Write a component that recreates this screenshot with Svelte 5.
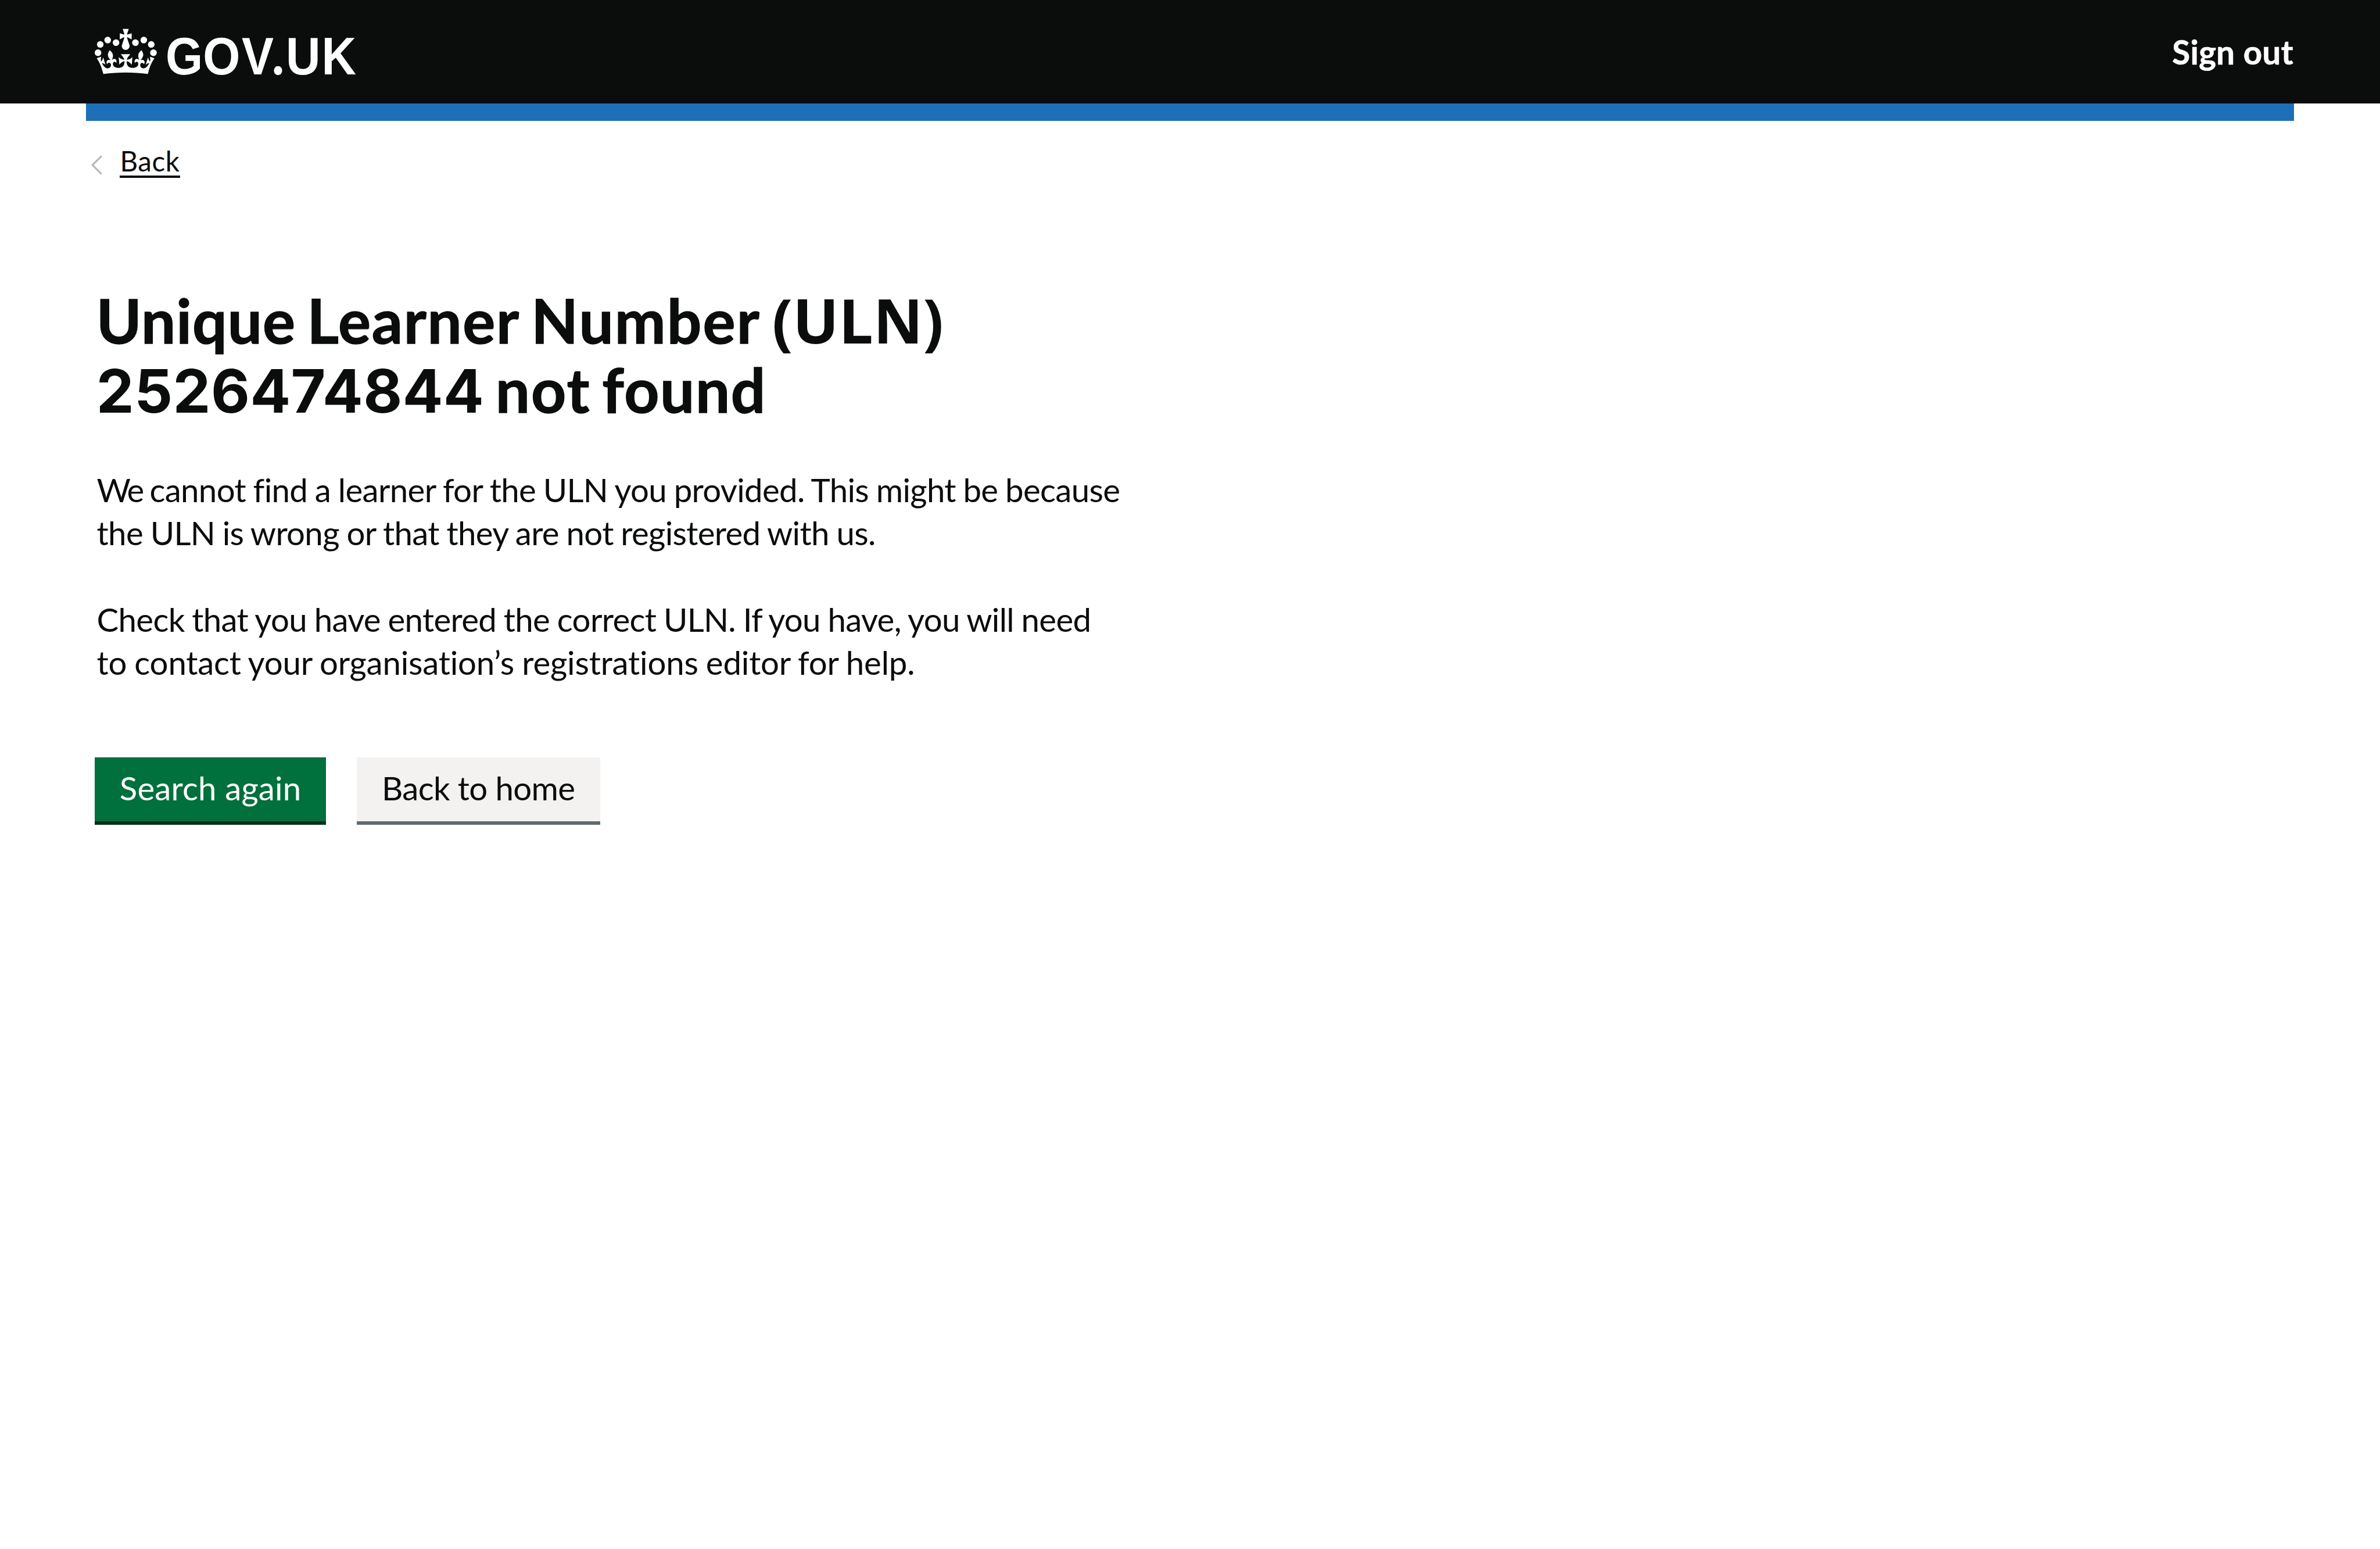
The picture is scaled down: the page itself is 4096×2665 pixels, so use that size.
<script>
  const paragraphs = [
    [
      { lead: 'We', text: ' cannot find a learner for the ULN you provided. This might be because', fit: 'fit-a' },
      { text: 'the ULN is wrong or that they are not registered with us.', fit: 'fit-b' }
    ],
    [
      { text: 'Check that you have entered the correct ULN. If you have, you will need', fit: 'fit-b' },
      { text: 'to contact your organisation’s registrations editor for help.', fit: 'fit-c' }
    ]
  ];
  const crown =
    'M25 30.2c3.5 1.5 7.7-.2 9.1-3.7 1.5-3.6-.2-7.8-3.9-9.2-3.6-1.4-7.6.3-9.1 3.9-1.4 3.5.3 7.5 3.9 9zM9 39.5c3.6 1.5 7.8-.2 9.2-3.7 1.5-3.6-.2-7.8-3.9-9.1-3.6-1.5-7.6.2-9.1 3.8-1.4 3.5.3 7.5 3.8 9zM4.4 57.2c3.5 1.5 7.7-.2 9.1-3.8 1.5-3.6-.2-7.7-3.9-9.1-3.5-1.5-7.6.3-9.1 3.8-1.4 3.5.3 7.6 3.9 9.1zm38.3-21.4c3.5 1.5 7.7-.2 9.1-3.8 1.5-3.6-.2-7.7-3.9-9.1-3.6-1.5-7.6.3-9.1 3.8-1.3 3.6.4 7.7 3.9 9.1zm64.4-5.6c-3.6 1.5-7.8-.2-9.1-3.7-1.5-3.6.2-7.8 3.8-9.2 3.6-1.4 7.7.3 9.2 3.9 1.3 3.5-.4 7.5-3.9 9zm15.9 9.3c-3.6 1.5-7.7-.2-9.1-3.7-1.5-3.6.2-7.8 3.7-9.1 3.6-1.5 7.7.2 9.2 3.8 1.5 3.5-.3 7.5-3.8 9zm4.7 17.7c-3.6 1.5-7.8-.2-9.2-3.8-1.5-3.6.2-7.7 3.9-9.1 3.6-1.5 7.7.3 9.2 3.8 1.3 3.5-.4 7.6-3.9 9.1zM89.3 35.8c-3.6 1.5-7.8-.2-9.2-3.8-1.4-3.6.2-7.7 3.9-9.1 3.6-1.5 7.7.3 9.2 3.8 1.4 3.6-.3 7.7-3.9 9.1zM69.7 17.7l8.9 4.7V9.3l-8.9 2.8c-.2-.3-.5-.6-.9-.9L72.4 0H59.6l3.5 11.2c-.3.3-.6.5-.9.9l-8.8-2.8v13.1l8.8-4.7c.3.3.6.7.9.9l-5 15.4v.1c-.2.8-.4 1.6-.4 2.4 0 4.1 3.1 7.5 7 8.1h.2c.3 0 .7.1 1 .1.4 0 .7 0 1-.1h.2c4-.6 7.1-4.1 7.1-8.1 0-.8-.1-1.7-.4-2.4V34l-5.1-15.4c.4-.2.7-.6 1-.9zM66 92.8c16.9 0 32.8 1.1 47.1 3.2 4-16.9 8.9-26.7 14-33.5l-9.6-3.4c1 4.9 1.1 7.2 0 10.2-1.5-1.4-3-4.3-4.2-8.7L108.6 76c2.8-2 5-3.2 7.5-3.3-4.4 9.4-10 11.9-13.6 11.2-4.3-.8-6.3-4.6-5.6-7.9 1-4.7 5.7-5.9 8-.5 4.3-8.7-3-11.4-7.6-8.8 7.1-7.2 7.9-13.5 2.1-21.1-8 6.1-8.1 12.3-4.5 20.8-4.7-5.4-12.1-2.5-9.5 6.2 3.4-5.2 7.9-2 7.2 3.1-.6 4.3-6.4 7.8-13.5 7.2-10.3-.9-10.9-8-11.2-13.8 2.5-.5 7.1 1.8 11 7.3L80.2 60c-4.1 4.4-8 5.3-12.3 5.4 1.4-4.4 8-11.6 8-11.6H55.5s6.4 7.2 7.9 11.6c-4.2-.1-8-1-12.3-5.4l1.4 16.4c3.9-5.5 8.5-7.7 10.9-7.3-.3 5.8-.9 12.8-11.1 13.8-7.2.6-12.9-2.9-13.5-7.2-.7-5 3.8-8.3 7.1-3.1 2.7-8.7-4.6-11.6-9.4-6.2 3.7-8.5 3.6-14.7-4.6-20.8-5.8 7.6-5 13.9 2.2 21.1-4.7-2.6-11.9.1-7.7 8.8 2.3-5.5 7.1-4.2 8.1.5.7 3.3-1.3 7.1-5.7 7.9-3.5.7-9-1.8-13.5-11.2 2.5.1 4.7 1.3 7.5 3.3l-4.7-15.4c-1.2 4.4-2.7 7.2-4.3 8.7-1.1-3-.9-5.3 0-10.2l-9.5 3.4c5 6.9 9.9 16.7 14 33.5 14.8-2.1 30.8-3.2 47.7-3.2z';
</script>

<header class="header">
  <svg class="logo" viewBox="0 0 620 180" role="img" aria-label="GOV.UK">
    <g transform="translate(0 67) scale(1.09)"><path d={crown} /></g>
    <text class="wordmark" transform="scale(.91 1)" y="172" x="180.5 276 374.6 447 487.2 578.5">GOV<tspan class="dot">.</tspan>UK</text>
  </svg>
  <a class="sign-out" href="#sign-out">Sign out</a>
</header>
<div class="accent"></div>

<nav class="back-row">
  <svg class="chevron" viewBox="0 0 26 46"><path d="M24 2 3 22.8 24 44" /></svg>
  <a class="back" href="#back">Back</a>
</nav>

<main class="content">
  <h1>
    <span class="w-unique">Unique</span> <span class="w-learner">Learner</span> <span class="w-number">Number</span> <span class="w-uln">(ULN)</span><br />
    <span class="digits">2526474844</span> <span class="w-number">not</span> <span class="w-learner">found</span>
  </h1>
  {#each paragraphs as lines}
    <p>
      {#each lines as line}
        <span class="line {line.fit}">{#if line.lead}<span class="lead">{line.lead}</span>{/if}{line.text}</span>
      {/each}
    </p>
  {/each}
  <div class="actions">
    <button class="button primary">Search again</button>
    <button class="button secondary">Back to home</button>
  </div>
</main>

<style>
  /* 1rem is 1/55.2 of the window's width */
  :global(html) { font-size: calc(100vw / 55.2); }
  :global(body) { margin: 0; background: #fff; color: #0b0c0c; font-family: Lato, "Open Sans", sans-serif; overflow: hidden; }

  .header {
    display: flex;
    justify-content: space-between;
    align-items: flex-start;
    box-sizing: border-box;
    height: 2.4rem;
    padding: 0 2.005rem 0 2.2rem;
    background: #0b0c0c;
  }
  .logo { width: 6.2rem; height: 1.8rem; fill: #fff; overflow: visible; }
  .wordmark { font: 700 122px "Liberation Sans", Arial, sans-serif; }
  .dot { font-family: Inter, sans-serif; }
  .sign-out {
    margin-top: 0.698rem;
    color: #fff;
    font-size: 0.76rem;
    font-weight: 700;
    line-height: 1rem;
    letter-spacing: 0.006rem;
    text-decoration: none;
    -webkit-text-stroke: 0.008rem #fff;
  }
  .accent { height: 0.4rem; margin: 0 2rem; background: #1d70b8; }

  .back-row {
    display: flex;
    align-items: flex-start;
    box-sizing: border-box;
    height: 3.82rem;
    padding: 0.544rem 0 0 2.12rem;
  }
  .chevron { width: 0.26rem; height: 0.46rem; margin-top: 0.256rem; fill: none; stroke: #b9babb; stroke-width: 4.4; }
  .back {
    box-sizing: border-box;
    width: 1.407rem;
    height: 0.784rem;
    margin-left: 0.393rem;
    padding: 0.022rem 0 0 0.01rem;
    border-bottom: 0.054rem solid #0b0c0c;
    color: #0b0c0c;
    font-size: 0.64rem;
    line-height: 0.736rem;
    letter-spacing: 0.008rem;
    text-decoration: none;
  }

  .content { padding-left: 2.245rem; }
  h1 {
    margin: 0 0 1.032rem -0.01rem;
    font-size: 1.415rem;
    font-weight: 700;
    line-height: 1.6rem;
    word-spacing: -0.08rem;
    white-space: nowrap;
    -webkit-text-stroke: 0.018rem #0b0c0c;
  }
  .w-unique { letter-spacing: 0.014rem; }
  .w-learner { letter-spacing: 0.022rem; }
  .w-number { letter-spacing: 0.029rem; }
  .w-uln { font-family: "Open Sans", sans-serif; line-height: 0; -webkit-text-stroke: 0; }
  .digits { font-family: Inter, sans-serif; font-size: 1.39rem; line-height: 0; letter-spacing: 0.006rem; -webkit-text-stroke: 0; }

  p { margin: 0 0 1rem; font-size: 0.76rem; line-height: 1rem; word-spacing: -0.015rem; white-space: nowrap; }
  .line { display: block; }
  .lead { letter-spacing: -0.045rem; }
  .fit-a { letter-spacing: -0.0091rem; }
  .fit-b { letter-spacing: -0.0091rem; }
  .fit-c { letter-spacing: -0.0025rem; }

  p:has(+ .actions) { margin-bottom: 0; }
  .actions { display: flex; gap: 0.72rem; margin: 1.708rem 0 0 -0.045rem; }
  .button {
    box-sizing: border-box;
    height: 1.56rem;
    padding: 0.206rem 0 0.272rem 0.574rem;
    border: 0;
    border-bottom: 0.082rem solid;
    font: 0.76rem/1rem Lato, "Open Sans", sans-serif;
    text-align: left;
    white-space: nowrap;
  }
  .primary { width: 5.36rem; background: #00703c; border-color: #002d18; color: #fff; letter-spacing: 0.002rem; }
  .secondary { width: 5.64rem; background: #f3f2f1; border-color: #626a6e; color: #0b0c0c; letter-spacing: -0.0085rem; }
</style>
